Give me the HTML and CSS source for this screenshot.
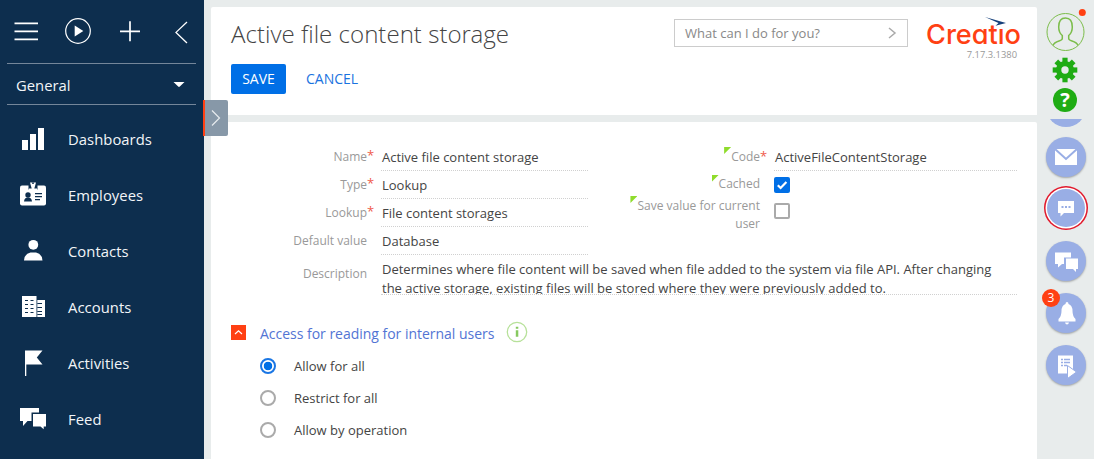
FILE: index.html
```html
<!DOCTYPE html>
<html lang="en">
<head>
<meta charset="utf-8">
<title>Active file content storage</title>
<link rel="stylesheet" href="styles.css">
</head>
<body>
<div class="app">
  <nav class="sidebar">
    <svg class="tools" width="204" height="63" viewBox="0 0 204 63" fill="none" stroke="#fff">
      <path d="M14.5 23.3h23.5M14.5 31.3h23.5M14.5 39.3h23.5M120 31.3h20M130 21.3v20" stroke-width="1.7"/>
      <circle cx="78" cy="31" r="12.3" stroke-width="1.2"/>
      <path d="M74.7 25.5v11l8.6-5.5z" fill="#fff" stroke="none"/>
      <path d="M187 22l-11 10.4L187 43" stroke-width="1.3"/>
    </svg>
    <div class="workplace"><span>General</span><svg width="12" height="6" viewBox="0 0 12 6"><path d="M.5 0h11L6.8 4.6q-.8.8-1.6 0z" fill="#fff"/></svg></div>
    <a class="item"><svg width="28" height="28" viewBox="0 0 28 28" fill="#fff"><path d="M3 15h6v10H3zM11 9h6v16h-6zM19 3h6v22h-6z"/></svg><span>Dashboards</span></a>
    <a class="item"><svg width="28" height="28" viewBox="0 0 28 28"><path d="M3 4.500h22q2 0 2 2v16q0 2-2 2H3q-2 0-2-2v-16q0-2 2-2z" fill="#fff"/><path d="M9.500 3v5.500h9V3z" fill="#0d2e4e"/><path d="M11 1.500h6l-1.700 6h2.700v1.500h-8V7.500h2.700z" fill="#fff"/><path d="M13.200 1.500h1.600v1.500h-1.600z" fill="#0d2e4e"/><g fill="#0d2e4e"><circle cx="9" cy="14" r="2.700"/><path d="M5 20.500q.3-4 4-4t4 4zM16 12h7v1.200h-7zM16 15h7v1.200h-7zM16 18h5v1.200h-5z"/></g></svg><span>Employees</span></a>
    <a class="item"><svg width="28" height="28" viewBox="0 0 28 28" fill="#fff"><circle cx="14.300" cy="7.800" r="4.900"/><path d="M5 23.500q.6-7 6.500-8h5.500q5.900 1 6.500 8z"/></svg><span>Contacts</span></a>
    <a class="item"><svg width="28" height="28" viewBox="0 0 28 28"><path d="M3 3h14.500v21H3zM18.300 7H26v17h-7.700z" fill="#fff"/><path d="M6 7.500h3m2.500 0h3M6 11.500h3m2.500 0h3M6 15.500h3m2.500 0h3M6 19.500h3m2.500 0h3M18.300 10.500h4.700m-4.700 4h4.700m-4.700 4h4.700m-4.700 3h4.700" stroke="#0d2e4e" stroke-width="1.200"/></svg><span>Accounts</span></a>
    <a class="item"><svg width="28" height="28" viewBox="0 0 28 28" fill="#fff"><path d="M6 1.500h17.500l-5.700 7 5.700 7H7.300V27H6z"/></svg><span>Activities</span></a>
    <a class="item"><svg width="28" height="28" viewBox="0 0 28 28" fill="#fff"><path d="M1 3h19v4.500h-7.500V16H8.500L4 21v-5H1z"/><path d="M14 9h13v12.500h-2.300v2.700L21.500 21.500H14z"/></svg><span>Feed</span></a>
  </nav>

  <main class="main">
    <header class="card head">
      <div class="head-left">
        <h1>Active file content storage</h1>
        <div class="buttons"><button class="save">SAVE</button><button class="cancel">CANCEL</button></div>
      </div>
      <div class="command"><span>What can I do for you?</span><svg width="10" height="14" viewBox="0 0 10 14"><path d="M2 2l6 5-6 5" fill="none" stroke="#aaa" stroke-width="1.500"/></svg></div>
      <div class="brand">
        <svg width="98" height="32" viewBox="0 0 98 32">
          <text class="logo" x="1" y="28.500" textLength="95" lengthAdjust="spacingAndGlyphs">Creatio</text>
          <path d="M70 0h12v12H70z" fill="#fff"/>
          <path d="M60 2l21 6-10.500 2.800 3-2.900z" fill="#16407b"/>
        </svg>
        <span>7.17.3.1380</span>
      </div>
    </header>

    <section class="card content">
      <div class="form">
        <div class="col">
          <div class="field"><label class="req">Name</label><div class="value">Active file content storage</div></div>
          <div class="field"><label class="req">Type</label><div class="value">Lookup</div></div>
          <div class="field"><label class="req">Lookup</label><div class="value">File content storages</div></div>
          <div class="field"><label>Default value</label><div class="value">Database</div></div>
        </div>
        <div class="col right">
          <div class="field"><label class="req"><i></i>Code</label><div class="value">ActiveFileContentStorage</div></div>
          <div class="field check"><label><i></i>Cached</label><b class="box on"><svg width="16" height="16" viewBox="0 0 16 16"><path d="M3.800 8.200l2.800 2.800 5.800-6" fill="none" stroke="#fff" stroke-width="2.200"/></svg></b></div>
          <div class="field check two"><label><i></i>Save value for current<br>user</label><b class="box"></b></div>
        </div>
      </div>
      <div class="field description"><label>Description</label><div class="value">Determines where file content will be saved when file added to the system via file API. After changing<br>the active storage, existing files will be stored where they were previously added to.</div></div>

      <div class="group"><b class="toggle"><svg width="15" height="15" viewBox="0 0 15 15"><path d="M4 9l3.500-3.300L11 9" fill="none" stroke="#fff" stroke-width="1.200"/></svg></b><span>Access for reading for internal users</span>
        <svg class="info" width="22" height="22" viewBox="0 0 22 22"><circle cx="11" cy="11" r="9.700" fill="none" stroke="#b7e19a" stroke-width="1.300"/><path d="M9.800 5.800h2.500v2H9.800zM9.800 9.300h2.500v6.500H9.800z" fill="#86c95f"/></svg></div>
      <div class="radios">
        <div class="radio on"><b></b><span>Allow for all</span></div>
        <div class="radio"><b></b><span>Restrict for all</span></div>
        <div class="radio"><b></b><span>Allow by operation</span></div>
      </div>
    </section>
  </main>

  <aside class="rail">
    <div class="profile"><svg width="48" height="44" viewBox="0 0 48 44" fill="none"><circle cx="23.500" cy="24" r="18.500" stroke="#7cbd4b"/><path d="M11 37.500q1-3 6-4.500 3.300-1 3.300-2.500v-3q-3.600-3-3.600-8.500 0-9 6.800-9t6.800 9q0 5.500-3.600 8.500v3q0 1.500 3.300 2.500 5 1.500 6 4.500" stroke="#7cbd4b" stroke-width="1.500"/><circle cx="40.300" cy="4.500" r="3.500" fill="#ff4013"/></svg></div>
    <svg class="gear" width="26" height="26" viewBox="-13 -13 26 26" fill="#1fac14"><path d="M-2.600-12.300h5.200V12.300h-5.200z"/><path d="M-2.600-12.300h5.200V12.300h-5.200z" transform="rotate(45)"/><path d="M-2.600-12.300h5.200V12.300h-5.200z" transform="rotate(90)"/><path d="M-2.600-12.300h5.200V12.300h-5.200z" transform="rotate(135)"/><circle r="9"/><circle r="3.700" fill="#e8ecec"/></svg>
    <div class="help">?</div>
    <div class="cut"><b></b></div>
    <div class="bubble"><svg width="40" height="40" viewBox="0 0 40 40"><path d="M9 12h22v16H9z" fill="#fff"/><path d="M9 12l11 10 11-10" fill="none" stroke="#99aee5" stroke-width="2"/></svg></div>
    <div class="bubble ring"><svg width="40" height="40" viewBox="0 0 40 40"><path d="M11 12h16v12H17L13.500 27.500v-3.500H11z" fill="#fff"/><path d="M14.500 18h2m1.500 0h2m1.500 0h2" stroke="#99aee5" stroke-width="2"/></svg></div>
    <div class="bubble"><svg width="40" height="40" viewBox="0 0 40 40" fill="#fff"><path d="M9 11.500h16v5h-7V23h-2l-4 3.500V23H9z"/><path d="M20 17.500h12V28h-2v3l-3-3h-7z"/></svg></div>
    <div class="bubble"><svg width="40" height="40" viewBox="0 0 40 40" fill="#fff"><path d="M21 9q1.500 0 1.500 2 4 1.500 4 7 0 5 3 8v2.500h-17V26q3-3 3-8 0-5.500 4-7 0-2 1.500-2zM19 29.500h4q-.5 2-2 2t-2-2z"/></svg><em>3</em></div>
    <div class="bubble"><svg width="40" height="40" viewBox="0 0 40 40"><path d="M12 10.500h15v18H12z" fill="#fff"/><path d="M15 14.500h2m1 0h6m-9 3h2m1 0h6m-9 3h2m1 0h3" stroke="#99aee5" stroke-width="1.300"/><path d="M21.500 20.500v13l9-6.500z" fill="#fff" stroke="#99aee5"/></svg></div>
  </aside>
  <div class="handle"><svg width="10" height="18" viewBox="0 0 10 18"><path d="M1 1.500L8.500 9 1 16.500" fill="none" stroke="#e7ebee" stroke-width="1.200"/></svg></div>
</div>
</body>
</html>
```
FILE: styles.css
```css
* { box-sizing: border-box; }
body { margin: 0; font-family: "Open Sans", sans-serif; font-size: 13px; color: #444; background: #e8ecec; overflow: hidden; }
svg { display: block; flex: none; overflow: visible; }
b, em, i { font-style: normal; font-weight: 400; }
.app { position: relative; display: flex; height: 459px; }

.sidebar { width: 204px; flex: none; background: #0d2e4e; color: #f2f5f8; overflow: hidden; }
.workplace { height: 42px; margin: 0 8px 6px 7px; padding: 2px 11px 0 9px; display: flex; align-items: center; justify-content: space-between; border-top: 1px solid #74869a; border-bottom: 1px solid #74869a; font-size: 14.8px; }
.item { height: 56px; padding-left: 19px; display: flex; align-items: center; gap: 21px; font-size: 14.8px; letter-spacing: .05px; }
.item span { padding-bottom: 1px; }
.workplace span { padding-bottom: 1px; }

.main { width: 833px; flex: none; padding: 7px 0 0 7px; display: flex; flex-direction: column; gap: 7px; }
.card { background: #fff; border-radius: 2px 2px 0 0; }
.head { height: 108px; display: flex; padding: 0 13px 0 20px; }
.head-left { width: 444px; }
h1 { margin: 9px 0 0; font-family: "Open Sans Light", "Open Sans", sans-serif; font-size: 24.100px; line-height: 36px; font-weight: 300; color: #444; white-space: nowrap; }
.buttons { display: flex; margin-top: 12px; }
button { border: 0; padding: 0 0 1px; height: 30px; font: 14px "Open Sans", sans-serif; background: none; color: #1a73e0; }
.save { width: 55px; border-radius: 2px; background: #006fe6; color: #fff; }
.cancel { margin-left: 20px; }
.command { width: 234px; height: 28px; margin-top: 12px; margin-left: -1px; padding: 0 10px; border: 1px solid #ccc; display: flex; align-items: center; justify-content: space-between; color: #888; }
.brand { flex: 1; margin: 8px 0 0 17px; }
.brand span { display: block; margin: 0 7px 0 0; text-align: right; font-size: 9.400px; line-height: 15px; color: #999; }
.logo { font: 500 27.500px Inter, sans-serif; font-feature-settings: "cv11" 1, "ss04" 1; fill: #ff4013; }

.content { flex: 1; padding: 21px 20px 0; }
.form { display: flex; justify-content: space-between; height: 112px; }
.col { width: 357px; }
.right { width: 396px; }
.field { height: 28px; display: flex; justify-content: space-between; }
.field label { position: relative; width: 136px; text-align: right; font-size: 12px; line-height: 27px; color: #999; }
.right label { width: 139px; line-height: 28px; }
.field .value { width: 207px; padding-left: 1px; line-height: 28px; border-bottom: 1px dotted #d0d0d0; white-space: nowrap; }
.right .value { width: 243px; }
.req::after { content: "*"; position: absolute; left: 100%; top: -1px; color: #ef5b4b; font-size: 13px; }
label i { display: inline-block; vertical-align: top; margin-top: 4px; width: 7px; height: 7px; background: #8fdc2c; clip-path: polygon(0 0, 100% 0, 0 100%); }
.check { justify-content: flex-start; gap: 14px; }
.right .check label { line-height: 26px; }
.box { width: 16px; height: 16px; margin-top: 6px; border: 2px solid #aaa; border-radius: 2px; }
.box.on { border: 0; background: #006fe6; }
.right .two label { line-height: 18px; margin-top: -2px; white-space: nowrap; }
.two label i { margin-top: -1px; margin-left: -1px; }
.two .box { margin-top: 4px; }
.description { height: 40px; }
.description label { line-height: 38px; }
.description .value { width: 636px; height: 40px; line-height: 19px; padding-top: 5px; overflow: hidden; }
.group { height: 22px; margin-top: 26px; display: flex; align-items: center; font-size: 14px; color: #5274d4; }
.toggle { width: 15px; height: 15px; margin: 1px 14px 0 0; background: #ff4013; }
.group span { padding-top: 2px; letter-spacing: -.02px; }
.info { margin-left: 12px; }
.radios { padding: 7px 0 0 29px; }
.radio { height: 32px; display: flex; align-items: center; gap: 18px; }
.radio b { width: 16px; height: 16px; margin-bottom: 1px; border: 2px solid #aaa; border-radius: 50%; }
.radio.on b { border-color: #1a76e4; background: radial-gradient(circle, #006fe6 4px, #fff 4.600px); }

.rail { width: 57px; flex: none; display: flex; flex-direction: column; align-items: center; padding-top: 8px; }
.gear { margin-top: 5px; }
.gear, .help { margin-right: 1px; }
.help { width: 24px; height: 24px; margin-top: 5px; border-radius: 50%; background: #1fac14; color: #fff; font-size: 20px; font-weight: 700; line-height: 24px; text-align: center; }
.cut { width: 40px; height: 8px; margin: 7px 0 10px; overflow: hidden; display: flex; align-items: flex-end; }
.cut b { width: 40px; height: 40px; flex: none; border-radius: 50%; background: #99aee5; }
.bubble { position: relative; width: 40px; height: 40px; flex: none; margin-bottom: 12px; border-radius: 50%; background: #99aee5; box-shadow: 0 1px 2px rgba(0,0,0,.3); }
.profile, .bubble, .cut { margin-left: 1px; }
.bubble.ring { width: 38px; height: 38px; margin: 0 0 14px; box-shadow: 0 0 0 1.500px #fff, 0 0 0 3px #e1192c; }
.bubble em { position: absolute; left: -4px; top: -4px; width: 18px; height: 18px; border-radius: 50%; background: #ff4013; color: #fff; font-size: 12px; line-height: 17px; text-align: center; }
.handle { position: absolute; left: 203px; top: 100px; width: 25px; height: 36px; border-left: 2px solid #ff4013; border-radius: 0 2px 2px 0; background: #8798a8; padding: 9px 0 0 6px; }
```
